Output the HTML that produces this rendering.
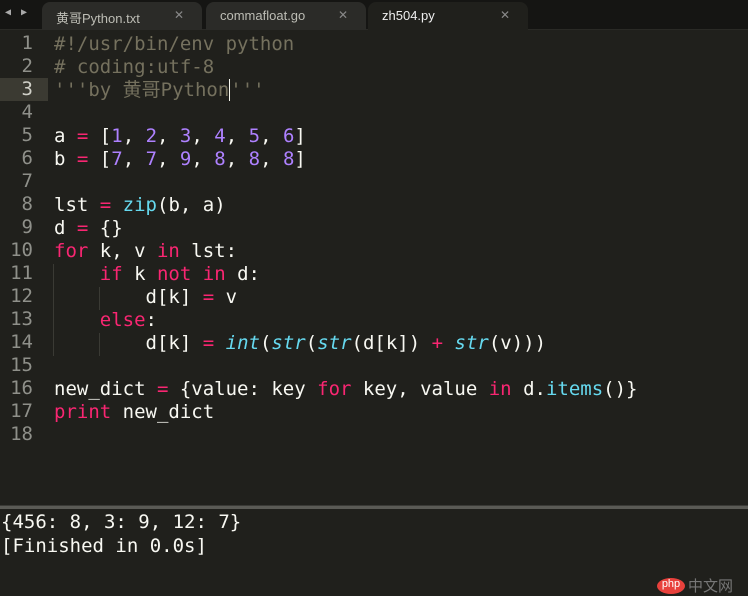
<!DOCTYPE html>
<html><head><meta charset="utf-8"><style>
*{margin:0;padding:0;box-sizing:border-box}
body{width:748px;height:585px;background:#20201c;overflow:hidden;position:relative;font-family:"DejaVu Sans Mono","Liberation Mono","Noto Sans CJK SC",monospace}
#tabs{position:absolute;left:0;top:0;width:748px;height:30px;background:#151513;border-bottom:1px solid #2a2a26}
.tab{position:absolute;top:2px;height:28px;background:#2b2b28;border-radius:8px 8px 0 0;font-family:"Liberation Sans","Noto Sans CJK SC",sans-serif;font-size:13px;color:#bdbdb5;padding:6px 0 0 14px}
.tab .x{position:absolute;right:18px;top:6px;color:#888;font-size:12px}
.tab.act{background:#20201c;color:#eee}
#arr{position:absolute;left:5px;top:7px;color:#aaa;font-size:10px;letter-spacing:2px}
#gut{position:absolute;left:0;top:32px;width:48px}
.ln{height:23px;line-height:23px;font-size:19px;color:#8f908a;text-align:right;padding-right:15px}
.ln.cur{background:#3b3a32;color:#d0d0c8}
#code{position:absolute;left:54px;top:33px}
.l{height:23px;line-height:23px;font-size:19px;color:#f8f8f2;white-space:pre}
.c{color:#75715e}.k{color:#f92672}.n{color:#ae81ff}.b{color:#66d9ef}.i{color:#66d9ef;font-style:italic}
.guide{position:absolute;width:1px;background:#3a3a34}
#sep{position:absolute;left:0;top:505px;width:748px;height:4px;background:#5a5a55;border-top:1px solid #3a3a36}
#out{position:absolute;left:1px;top:510px;font-size:19px;color:#f8f8f2;line-height:24px;white-space:pre}
#wm{position:absolute;left:657px;top:578px;width:28px;height:16px;background:#e8413c;border-radius:50%;color:#fff;font-size:11px;text-align:center;font-family:"Liberation Sans",sans-serif}
#wm2{position:absolute;left:688px;top:575px;color:#777;font-size:15px;font-family:"Noto Sans CJK SC",sans-serif}
</style></head><body>
<div id="tabs">
<div id="arr">◀ ▶</div>
<div class="tab" style="left:42px;width:160px">黄哥Python.txt<span class="x">✕</span></div>
<div class="tab" style="left:206px;width:160px">commafloat.go<span class="x">✕</span></div>
<div class="tab act" style="left:368px;width:160px">zh504.py<span class="x">✕</span></div>
</div>
<div id="gut">
<div class="ln">1</div><div class="ln">2</div><div class="ln cur">3</div><div class="ln">4</div><div class="ln">5</div><div class="ln">6</div><div class="ln">7</div><div class="ln">8</div><div class="ln">9</div><div class="ln">10</div><div class="ln">11</div><div class="ln">12</div><div class="ln">13</div><div class="ln">14</div><div class="ln">15</div><div class="ln">16</div><div class="ln">17</div><div class="ln">18</div>
</div>
<div class="guide" style="left:53px;top:264px;height:92px"></div>
<div class="guide" style="left:99px;top:287px;height:23px"></div>
<div class="guide" style="left:99px;top:333px;height:23px"></div>
<div id="code">
<div class="l c">#!/usr/bin/env python</div>
<div class="l c"># coding:utf-8</div>
<div class="l c">'''by 黄哥Python<span style="border-left:1px solid #f8f8f0"></span>'''</div>
<div class="l"> </div>
<div class="l">a <span class="k">=</span> [<span class="n">1</span>, <span class="n">2</span>, <span class="n">3</span>, <span class="n">4</span>, <span class="n">5</span>, <span class="n">6</span>]</div>
<div class="l">b <span class="k">=</span> [<span class="n">7</span>, <span class="n">7</span>, <span class="n">9</span>, <span class="n">8</span>, <span class="n">8</span>, <span class="n">8</span>]</div>
<div class="l"> </div>
<div class="l">lst <span class="k">=</span> <span class="b">zip</span>(b, a)</div>
<div class="l">d <span class="k">=</span> {}</div>
<div class="l"><span class="k">for</span> k, v <span class="k">in</span> lst:</div>
<div class="l">    <span class="k">if</span> k <span class="k">not</span> <span class="k">in</span> d:</div>
<div class="l">        d[k] <span class="k">=</span> v</div>
<div class="l">    <span class="k">else</span>:</div>
<div class="l">        d[k] <span class="k">=</span> <span class="i">int</span>(<span class="i">str</span>(<span class="i">str</span>(d[k]) <span class="k">+</span> <span class="i">str</span>(v)))</div>
<div class="l"> </div>
<div class="l">new_dict <span class="k">=</span> {value: key <span class="k">for</span> key, value <span class="k">in</span> d.<span class="b">items</span>()}</div>
<div class="l"><span class="k">print</span> new_dict</div>
<div class="l"> </div>
</div>
<div id="sep"></div>
<div id="out">{456: 8, 3: 9, 12: 7}
[Finished in 0.0s]</div>
<div id="wm">php</div><div id="wm2">中文网</div>
</body></html>
